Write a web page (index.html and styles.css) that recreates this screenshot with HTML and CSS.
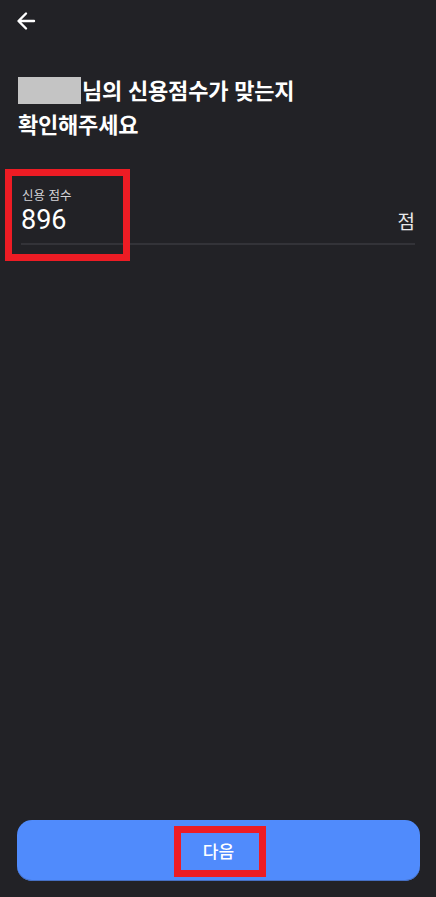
FILE: index.html
```html
<!DOCTYPE html>
<html lang="ko">
<head>
  <meta charset="UTF-8" />
  <meta name="viewport" content="width=device-width, initial-scale=1" />
  <title>신용점수 확인</title>
  <link rel="stylesheet" href="styles.css">
</head>
<body>
  <div class="screen">
    <!-- Top bar -->
    <div class="top-bar">
      <button class="back-btn" aria-label="뒤로">
        <svg viewBox="0 0 24 24" width="24" height="24">
          <path d="M20 12H5M12 4.5L4.5 12L12 19.5" fill="none" stroke="#fff" stroke-width="2.4" stroke-linecap="round" stroke-linejoin="round"/>
        </svg>
      </button>
    </div>

    <h1 class="title"><span class="masked-name"></span>님의 신용점수가 맞는지<br>확인해주세요</h1>

    <div class="field">
      <div class="field-label">신용 점수</div>
      <div class="field-row">
        <span class="field-value">896</span>
        <span class="field-unit">점</span>
      </div>
      <div class="highlight field-highlight"></div>
    </div>

    <div class="bottom">
      <button class="next-btn">
        다음
        <span class="highlight next-highlight"></span>
      </button>
    </div>
  </div>
</body>
</html>
```

FILE: styles.css
```css
body, html {
  margin: 0;
  height: 100%;
  background: #222226;
  font-family: Roboto, "Noto Sans CJK KR", sans-serif;
  color: #ffffff;
}

.screen {
  display: flex;
  flex-direction: column;
  height: 100vh;
}

.top-bar {
  height: 42px;
  padding-left: 13px;
  display: flex;
  align-items: center;
}

.back-btn {
  background: none;
  border: none;
  padding: 0;
  width: 26px;
  height: 26px;
  display: flex;
  align-items: center;
  justify-content: center;
  cursor: pointer;
}

.title {
  margin: 30px 0 0 18px;
  font-family: "Noto Sans CJK KR", sans-serif;
  font-size: 22px;
  font-weight: 700;
  line-height: 34px;
  letter-spacing: -0.2px;
}

.masked-name {
  display: inline-block;
  width: 63px;
  height: 27px;
  margin-right: 1px;
  background: #c4c4c4;
  vertical-align: -5px;
}

.field {
  position: relative;
  margin: 47px 21px 0 21px;
  border-bottom: 2px solid #333338;
  padding-bottom: 6px;
}

.field-label {
  font-family: "Noto Sans CJK KR", sans-serif;
  font-size: 12.5px;
  line-height: 16px;
  color: #d4d4d8;
  margin-left: 1px;
}

.field-row {
  display: flex;
  justify-content: space-between;
  align-items: center;
  height: 34px;
}

.field-value {
  font-size: 27px;
}

.field-unit {
  font-family: "Noto Sans CJK KR", sans-serif;
  font-size: 19px;
  color: #e8e8ea;
}

.highlight {
  position: absolute;
  border: 7px solid #ed1c24;
  box-sizing: border-box;
}

.field-highlight {
  left: -16px;
  top: -18px;
  width: 125px;
  height: 92px;
}

.bottom {
  margin-top: auto;
  padding: 0 16px 16px 17px;
}

.next-btn {
  position: relative;
  width: 100%;
  height: 61px;
  border: none;
  border-radius: 15px;
  background: #508bfc;
  box-shadow: inset 0 -1px 0 #4670c4;
  color: #ffffff;
  font-family: "Noto Sans CJK KR", sans-serif;
  font-size: 17px;
  font-weight: 500;
  cursor: pointer;
}

.next-highlight {
  left: 157px;
  top: 6px;
  width: 92px;
  height: 51px;
}
```
